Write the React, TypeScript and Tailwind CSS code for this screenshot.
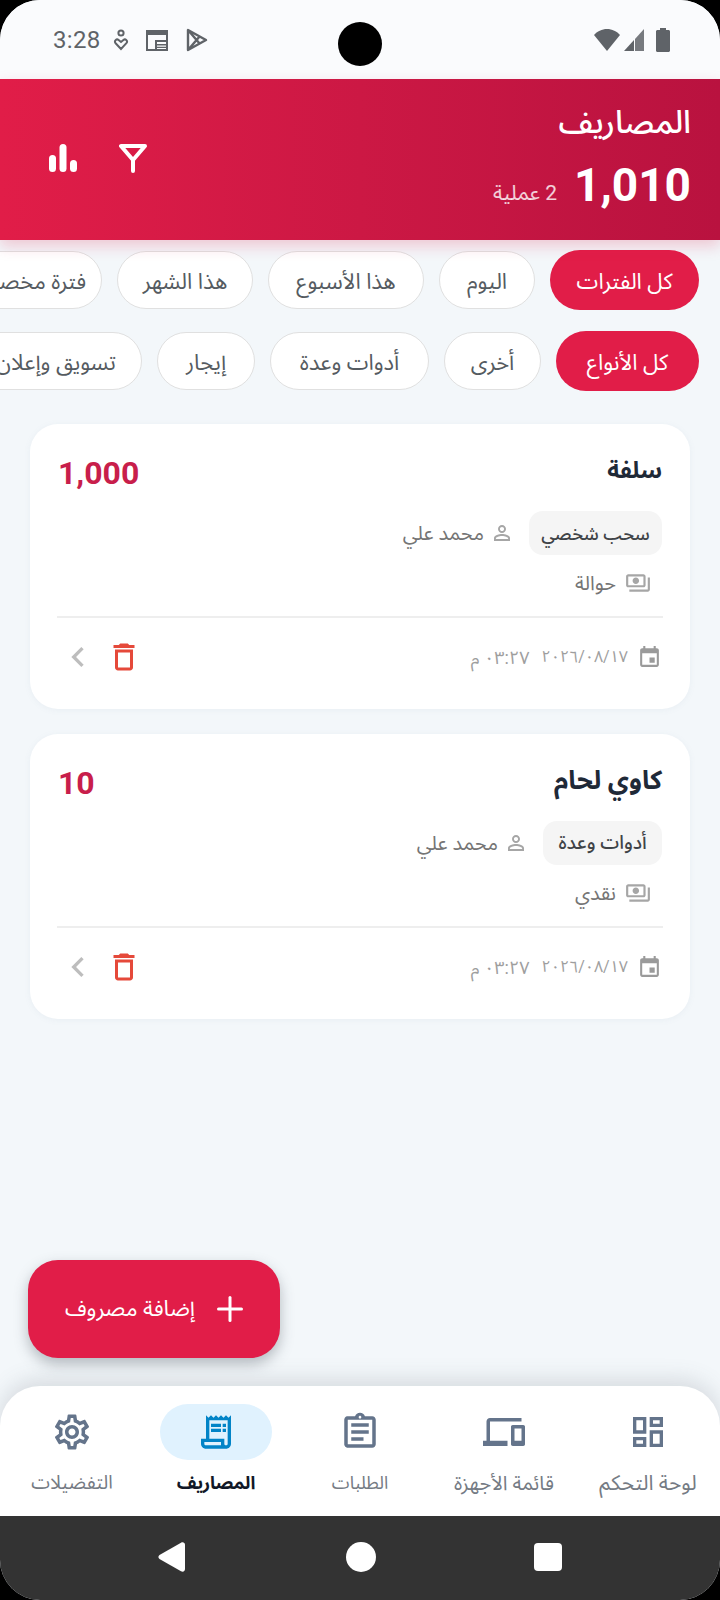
import React from "react";

const P = {
  trash: "M6 19c0 1.1.9 2 2 2h8c1.1 0 2-.9 2-2V7H6v12zM8 9h8v10H8V9zm7.5-5l-1-1h-5l-1 1H5v2h14V4z",
  chevron: "M15.41 7.41L14 6l-6 6 6 6 1.41-1.41L10.83 12z",
  event: "M17 12h-5v5h5v-5zM16 1v2H8V1H6v2H5c-1.11 0-1.99.9-1.99 2L3 19c0 1.1.89 2 2 2h14c1.1 0 2-.9 2-2V5c0-1.1-.9-2-2-2h-1V1h-2zm3 18H5V8h14v11z",
  person: "M12 5.9c1.16 0 2.1.94 2.1 2.1s-.94 2.1-2.1 2.1S9.9 9.16 9.9 8s.94-2.1 2.1-2.1m0 9c2.97 0 6.1 1.46 6.1 2.1v1.1H5.9V17c0-.64 3.13-2.1 6.1-2.1M12 4C9.79 4 8 5.79 8 8s1.79 4 4 4 4-1.79 4-4-1.79-4-4-4zm0 9c-2.67 0-8 1.34-8 4v3h16v-3c0-2.66-5.33-4-8-4z",
  payments: "M19 14V6c0-1.1-.9-2-2-2H3c-1.1 0-2 .9-2 2v8c0 1.1.9 2 2 2h14c1.1 0 2-.9 2-2zm-2 0H3V6h14v8zm-7-7c-1.66 0-3 1.34-3 3s1.34 3 3 3 3-1.34 3-3-1.34-3-3-3zm13 0v11c0 1.1-.9 2-2 2H4v-2h17V7h2z",
  dashboard: "M19 5v2h-4V5h4M9 5v6H5V5h4m10 8v6h-4v-6h4M9 17v2H5v-2h4M21 3h-8v6h8V3zM11 3H3v10h8V3zm10 8h-8v10h8V11zm-10 4H3v6h8v-6z",
  devices: "M4 6h18V4H4c-1.1 0-2 .9-2 2v11H0v3h14v-3H4V6zm19 2h-6c-.55 0-1 .45-1 1v10c0 .55.45 1 1 1h6c.55 0 1-.45 1-1V9c0-.55-.45-1-1-1zm-1 9h-4v-7h4v7z",
  assignment: "M7 15h7v2H7zm0-4h10v2H7zm0-4h10v2H7zm12-4h-4.18C14.4 1.84 13.3 1 12 1c-1.3 0-2.4.84-2.82 2H5c-.14 0-.27.01-.4.04-.39.08-.74.28-1.01.55-.18.18-.33.4-.43.64-.1.23-.16.49-.16.77v14c0 .27.06.54.16.78s.25.45.43.64c.27.27.62.47 1.01.55.13.02.26.03.4.03h14c1.1 0 2-.9 2-2V5c0-1.1-.9-2-2-2zm-7-.25c.41 0 .75.34.75.75s-.34.75-.75.75-.75-.34-.75-.75.34-.75.75-.75zM19 19H5V5h14v14z",
  receipt: "M19.5 3.5L18 2l-1.5 1.5L15 2l-1.5 1.5L12 2l-1.5 1.5L9 2 7.5 3.5 6 2v14H3v3c0 1.66 1.34 3 3 3h12c1.66 0 3-1.34 3-3V2l-1.5 1.5zM15 20H6c-.55 0-1-.45-1-1v-1h10v2zm4-1c0 .55-.45 1-1 1s-1-.45-1-1v-3H8V5h11v14zM9 7h6v2H9zm7 0h2v2h-2zM9 10h6v2H9zm7 0h2v2h-2z",
  settings: "M19.43 12.98c.04-.32.07-.64.07-.98 0-.34-.03-.66-.07-.98l2.11-1.65c.19-.15.24-.42.12-.64l-2-3.46c-.09-.16-.26-.25-.44-.25-.06 0-.12.01-.17.03l-2.49 1c-.52-.4-1.08-.73-1.69-.98l-.38-2.65C14.46 2.18 14.25 2 14 2h-4c-.25 0-.46.18-.49.42l-.38 2.65c-.61.25-1.17.59-1.69.98l-2.49-1c-.06-.02-.12-.03-.18-.03-.17 0-.34.09-.43.25l-2 3.46c-.13.22-.07.49.12.64l2.11 1.65c-.04.32-.07.65-.07.98 0 .33.03.66.07.98l-2.11 1.65c-.19.15-.24.42-.12.64l2 3.46c.09.16.26.25.44.25.06 0 .12-.01.17-.03l2.49-1c.52.4 1.08.73 1.69.98l.38 2.65c.03.24.24.42.49.42h4c.25 0 .46-.18.49-.42l.38-2.65c.61-.25 1.17-.59 1.69-.98l2.49 1c.06.02.12.03.18.03.17 0 .34-.09.43-.25l2-3.46c.12-.22.07-.49-.12-.64l-2.11-1.65zm-1.98-1.71c.04.31.05.52.05.73 0 .21-.02.43-.05.73l-.14 1.13.89.7 1.08.84-.7 1.21-1.27-.51-1.04-.42-.9.68c-.43.32-.84.56-1.25.73l-1.06.43-.16 1.13-.2 1.35h-1.4l-.19-1.35-.16-1.13-1.06-.43c-.43-.18-.83-.41-1.23-.71l-.91-.7-1.06.43-1.27.51-.7-1.21 1.08-.84.89-.7-.14-1.13c-.03-.31-.05-.54-.05-.74s.02-.43.05-.73l.14-1.13-.89-.7-1.08-.84.7-1.21 1.27.51 1.04.42.9-.68c.43-.32.84-.56 1.25-.73l1.06-.43.16-1.13.2-1.35h1.39l.19 1.35.16 1.13 1.06.43c.43.18.83.41 1.23.71l.91.7 1.06-.43 1.27-.51.7 1.21-1.07.85-.89.7.14 1.13zM12 8c-2.21 0-4 1.79-4 4s1.79 4 4 4 4-1.79 4-4-1.79-4-4-4zm0 6c-1.1 0-2-.9-2-2s.9-2 2-2 2 .9 2 2-.9 2-2 2z",
};

function Ic({ d, className }: { d: string; className: string }) {
  return (
    <svg viewBox="0 0 24 24" className={className} fill="currentColor">
      <path d={d} />
    </svg>
  );
}

function Chip({ label, on, className }: { label: string; on?: boolean; className: string }) {
  return (
    <div
      className={
        "shrink-0 flex items-center justify-center rounded-full whitespace-nowrap text-[22px] pt-[3px] " +
        (on
          ? "bg-[#e11d48] text-white h-[60px] "
          : "bg-white border border-[#e0e0e0] text-[#555b61] h-[58px] ") +
        className
      }
    >
      {label}
    </div>
  );
}

function Card({ title, titleSize, amount, tag, tagW, tagSize, pay }: { title: string; titleSize: string; amount: string; tag: string; tagW: string; tagSize: string; pay: string }) {
  return (
    <div className="bg-white rounded-[28px] h-[285px] px-[28px] pt-[24px] shadow-[0_1px_6px_rgba(120,140,160,0.08)]">
      <div className="flex justify-between items-center h-[44px]">
        <div className={"font-bold text-[#1f2937] leading-none " + titleSize}>{title}</div>
        <div className="text-[32px] font-bold text-[#c81e4b] leading-none mt-[6px]">{amount}</div>
      </div>
      <div className="flex items-center mt-[19px] h-[44px]">
        <div className={"h-[44px] rounded-[14px] bg-[#f5f5f5] flex items-center justify-center font-medium text-[#3f4347] " + tagW + " " + tagSize}>{tag}</div>
        <Ic d={P.person} className="w-[24px] h-[24px] mr-[15px] text-[#a6a6a6]" />
        <div className="mr-[6px] text-[20px] text-[#757575]">محمد علي</div>
      </div>
      <div className="flex items-center mt-[14px] h-[28px] pr-[11px]">
        <Ic d={P.payments} className="w-[26px] h-[26px] text-[#a6a6a6]" />
        <div className="mr-[9px] text-[20px] text-[#757575]">{pay}</div>
      </div>
      <div className="h-[2px] bg-[#eeeeee] mt-[19px] -ml-[1px] -mr-[1px]"></div>
      <div className="flex items-center justify-between mt-[24px] h-[30px]">
        <div className="flex items-center text-[16px] text-[#9e9e9e]">
          <Ic d={P.event} className="w-[25px] h-[25px] text-[#9a9a9a]" />
          <span className="mr-[9px]">٢٠٢٦/٠٨/١٧</span>
          <span className="mr-[12px] text-[18px]">٠٣:٢٧ م</span>
        </div>
        <div className="flex items-center gap-[8px]">
          <Ic d={P.trash} className="w-[36px] h-[36px] text-[#e5493a]" />
          <Ic d={P.chevron} className="w-[40px] h-[40px] text-[#bdbdbd]" />
        </div>
      </div>
    </div>
  );
}

function NavItem({ d, label, active, iconClass, size }: { d: string; label: string; active?: boolean; iconClass: string; size: string }) {
  return (
    <div className="flex-1 flex flex-col items-center">
      <div className={"w-[112px] h-[56px] rounded-full flex items-center justify-center " + (active ? "bg-[#e0f2fe]" : "")}>
        <Ic d={d} className={iconClass + (active ? " text-[#0284c7]" : " text-[#64748b]")} />
      </div>
      <div className={"mt-[9px] leading-[28px] whitespace-nowrap " + size + (active ? " font-bold text-[#111827]" : " text-[#757b84]")}>{label}</div>
    </div>
  );
}

export default function App() {
  return (
    <div className="w-[720px] h-[1600px] bg-black overflow-hidden [font-family:Roboto,'Noto_Sans_Arabic','Noto_Sans','DejaVu_Sans',sans-serif]">
      <div dir="rtl" className="relative w-full h-full rounded-[40px] overflow-hidden flex flex-col bg-[#f3f7fa]">
        {/* status bar */}
        <div dir="ltr" className="h-[79px] shrink-0 bg-[#fafbfd] flex items-center justify-between pl-[53px] pr-[50px] text-[#5f6368]">
          <div className="flex items-center h-[24px]">
            <span className="text-[24px] leading-none w-[60px] tracking-[0.3px]">3:28</span>
            <svg viewBox="0 0 16 22" className="w-[16px] h-[22px]" fill="none" stroke="currentColor" strokeWidth="2">
              <circle cx="8" cy="4" r="2.6" />
              <path d="M8 20 2.6 14.2c-1.8-2 .9-5 3-3.2L8 13l2.4-2c2.1-1.8 4.8 1.2 3 3.2z" />
            </svg>
            <svg viewBox="0 0 22 22" className="w-[22px] h-[22px] ml-[17px]" fill="currentColor">
              <path fillRule="evenodd" d="M0 1h22v21H0zM2 6v14h7v-9h11V6zM11 13v2h9v-2zm0 3.5v1.2h9v-1.2zm0 2.4V20h9v-1.1z" />
            </svg>
            <svg viewBox="0 0 22 24" className="w-[22px] h-[24px] ml-[18px]" fill="none" stroke="currentColor" strokeWidth="2.4" strokeLinejoin="round">
              <path d="M2 2v20l18-10zM2 2l12 14M2 22 14 8" />
            </svg>
          </div>
          <div className="flex items-center h-[24px]">
            <svg viewBox="0 0 26 22" className="w-[26px] h-[22px]" fill="currentColor"><path d="M13 22 0 6c3-3.500 8-6 13-6s10 2.500 13 6z" /></svg>
            <svg viewBox="0 0 21 22" className="w-[21px] h-[22px] ml-[3px]" fill="currentColor">
              <path d="M11 11 1 22h10z" />
              <path d="M12 10 21 0v22h-9z" opacity="0.85" />
            </svg>
            <svg viewBox="0 0 14 24" className="w-[14px] h-[24px] ml-[12px]" fill="currentColor"><path d="M4 0h6v2h2.500c.8 0 1.500.7 1.500 1.500V22.500c0 .8-.7 1.500-1.500 1.500h-11C.7 24 0 23.300 0 22.500V3.500C0 2.700.7 2 1.500 2H4z" /></svg>
          </div>
        </div>

        {/* header */}
        <div className="h-[161px] shrink-0 bg-gradient-to-l from-[#b9123f] via-[#cc1844] to-[#e11d48] shadow-[0_6px_14px_rgba(225,29,72,0.22)] flex justify-between pr-[29px] pl-[49px] pt-[22px] text-white z-10">
          <div className="flex flex-col">
            <div className="text-[32px] font-medium leading-[42px]">المصاريف</div>
            <div className="flex items-end mt-[16px]">
              <div dir="ltr" className="text-[46px] font-bold leading-[52px]">1,010</div>
              <div className="text-[21px] mr-[17px] mb-[5px] leading-[26px] text-white/80">2 عملية</div>
            </div>
          </div>
          <div className="flex items-center gap-[42px] h-[114px]">
            <svg viewBox="0 0 28 29" className="w-[28px] h-[29px]" fill="none" stroke="currentColor" strokeWidth="4" strokeLinejoin="round" strokeLinecap="round">
              <path d="M2 2h24L14 16zM14 16v11" />
            </svg>
            <svg viewBox="0 0 28 28" className="w-[28px] h-[28px]" fill="currentColor">
              <rect x="0" y="11" width="7" height="17" rx="3.500" />
              <rect x="10.500" y="0" width="7" height="28" rx="3.500" />
              <rect x="21" y="16" width="7" height="12" rx="3.500" />
            </svg>
          </div>
        </div>

        {/* chips */}
        <div className="flex items-center gap-[15px] pr-[21px] mt-[10px] h-[60px] overflow-hidden shrink-0">
          <Chip on label="كل الفترات" className="w-[149px]" />
          <Chip label="اليوم" className="w-[96px]" />
          <Chip label="هذا الأسبوع" className="w-[156px]" />
          <Chip label="هذا الشهر" className="w-[136px]" />
          <Chip label="فترة مخصصة" className="w-[150px]" />
        </div>
        <div className="flex items-center gap-[15px] pr-[21px] mt-[21px] h-[60px] overflow-hidden shrink-0">
          <Chip on label="كل الأنواع" className="w-[143px]" />
          <Chip label="أخرى" className="w-[97px]" />
          <Chip label="أدوات وعدة" className="w-[159px]" />
          <Chip label="إيجار" className="w-[98px]" />
          <Chip label="تسويق وإعلان" className="w-[172px]" />
        </div>

        {/* list */}
        <div className="flex-1 px-[30px] pt-[33px] flex flex-col gap-[25px]">
          <Card title="سلفة" titleSize="text-[23px]" amount="1,000" tag="سحب شخصي" tagW="w-[133px]" tagSize="text-[18px]" pay="حوالة" />
          <Card title="كاوي لحام" titleSize="text-[26px]" amount="10" tag="أدوات وعدة" tagW="w-[119px]" tagSize="text-[19px]" pay="نقدي" />
        </div>

        {/* FAB */}
        <div className="absolute left-[28px] top-[1260px] w-[252px] h-[98px] rounded-[30px] bg-[#e11d48] text-white flex items-center justify-center gap-[22px] shadow-[0_6px_14px_rgba(60,70,80,0.35)]">
          <svg viewBox="0 0 26 26" className="w-[26px] h-[26px]" fill="currentColor">
            <rect x="11.500" y="0" width="3" height="26" rx="1.500" />
            <rect x="0" y="11.500" width="26" height="3" rx="1.500" />
          </svg>
          <span className="text-[22px] leading-none">إضافة مصروف</span>
        </div>

        {/* bottom nav */}
        <div className="h-[130px] shrink-0 bg-white rounded-t-[40px] pt-[18px] flex shadow-[0_-6px_22px_rgba(80,90,100,0.18)] z-10">
          <NavItem d={P.dashboard} label="لوحة التحكم" size="text-[21px]" iconClass="w-[40px] h-[40px]" />
          <NavItem d={P.devices} label="قائمة الأجهزة" size="text-[20px]" iconClass="w-[42px] h-[42px]" />
          <NavItem d={P.assignment} label="الطلبات" size="text-[18px]" iconClass="w-[42px] h-[42px]" />
          <NavItem active d={P.receipt} label="المصاريف" size="text-[18px]" iconClass="w-[40px] h-[40px]" />
          <NavItem d={P.settings} label="التفضيلات" size="text-[19px]" iconClass="w-[42px] h-[42px]" />
        </div>

        {/* system nav */}
        <div dir="ltr" className="h-[84px] shrink-0 bg-[#333333] flex items-center justify-center pb-[2px] z-10">
          <svg viewBox="0 0 28 30" className="w-[28px] h-[30px] mr-[160px]" fill="white"><path d="M1.500 13 23 .8C25 -.3 27 .8 27 3v24c0 2.200-2 3.300-4 2.200L1.500 17c-1.500-1-1.500-3 0-4z" /></svg>
          <div className="w-[30px] h-[30px] rounded-full bg-white"></div>
          <div className="w-[28px] h-[28px] rounded-[4px] bg-white ml-[158px]"></div>
        </div>

        {/* camera */}
        <div className="absolute left-[338px] top-[22px] w-[44px] h-[44px] rounded-full bg-black z-20"></div>
      </div>
    </div>
  );
}
